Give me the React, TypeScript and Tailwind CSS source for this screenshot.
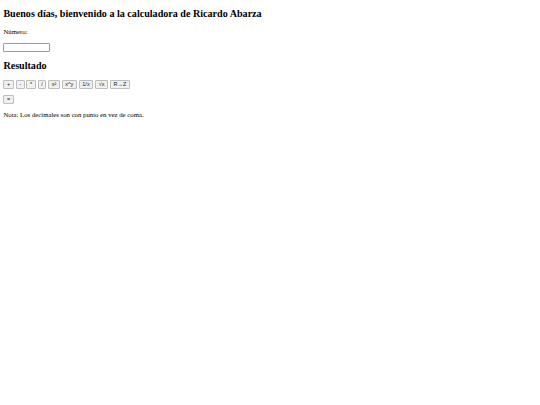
import React, { useState } from 'react';

const ops = ['+', '-', '*', '/', 'x²', 'x^y', '1/x', '√x', 'R→Z'];

const Key = ({ label, onClick }: { label: string; onClick?: () => void }) => (
    <button
        onClick={onClick}
        className="h-[9px] px-[2.6px] flex items-center justify-center bg-[#f0f0f0] border border-[#bdbdbd] rounded-[1px] text-[5.5px] leading-none text-[#222] font-['Liberation_Sans','DejaVu_Sans',Arial,sans-serif]"
    >
        {label}
    </button>
);

const App: React.FC = () => {
    const [num, setNum] = useState('');

    return (
        <div className="min-h-screen bg-white text-black px-[3.4px] pt-[8.4px] font-['Liberation_Serif','Times_New_Roman',serif]">
            <h2 className="text-[10.1px] font-bold leading-[11.6px]">Buenos días, bienvenido a la calculadora de Ricardo Abarza</h2>

            <p className="mt-[8.4px] text-[6.75px] leading-[7.8px]">Número:</p>
            <input
                value={num}
                onChange={e => setNum(e.target.value)}
                className="block mt-[6.8px] w-[47px] h-[9px] border border-[#9a9a9a] rounded-[1px] bg-white outline-none"
            />

            <h2 className="mt-[8.4px] text-[10.1px] font-bold leading-[11.6px]">Resultado</h2>

            <div className="mt-[8.4px] flex gap-[1.8px]">
                {ops.map(op => <Key key={op} label={op} />)}
            </div>

            <div className="mt-[6px] flex">
                <Key label="=" />
            </div>

            <p className="mt-[6.5px] text-[6.75px] leading-[7.8px]">Nota: Los decimales son con punto en vez de coma.</p>
        </div>
    );
};

export default App;
